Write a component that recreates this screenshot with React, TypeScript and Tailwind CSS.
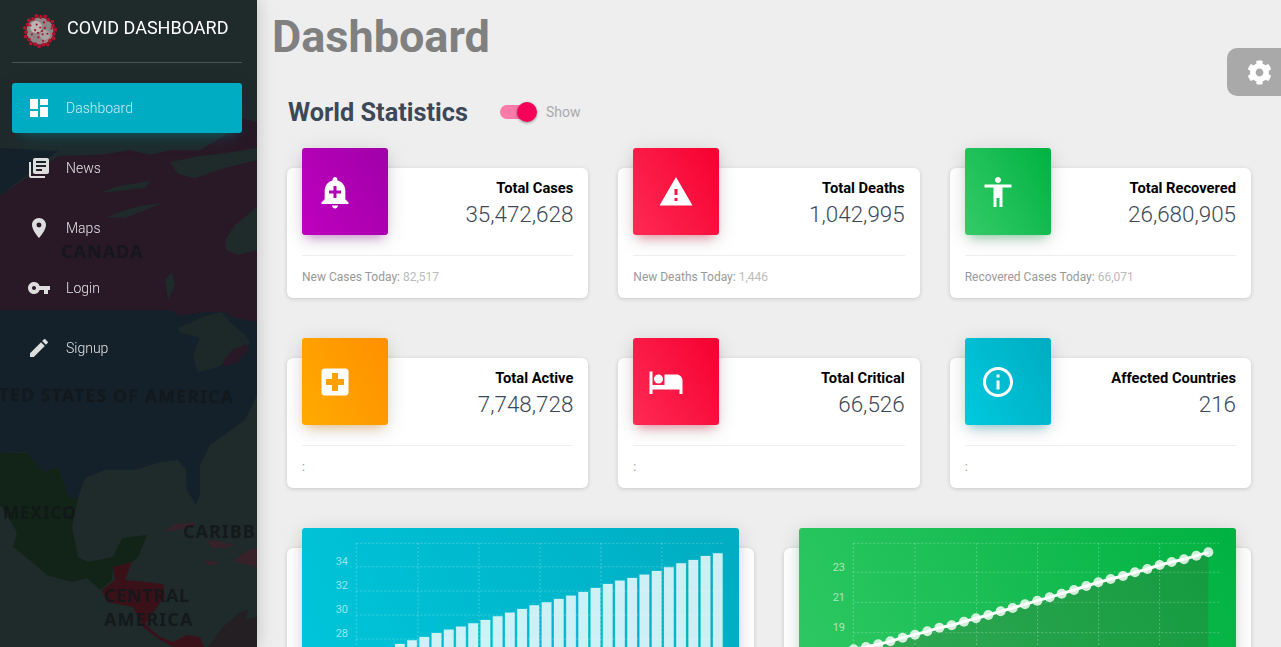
import type { ReactNode } from 'react';
import { FaCog } from 'react-icons/fa';
import {
  MdAccessibility,
  MdAddAlert,
  MdDashboard,
  MdEdit,
  MdHotel,
  MdInfoOutline,
  MdLibraryBooks,
  MdLocalHospital,
  MdPlace,
  MdVpnKey,
  MdWarning,
} from 'react-icons/md';

const navItems = [
  { label: 'Dashboard', icon: <MdDashboard />, active: true },
  { label: 'News', icon: <MdLibraryBooks /> },
  { label: 'Maps', icon: <MdPlace /> },
  { label: 'Login', icon: <MdVpnKey /> },
  { label: 'Signup', icon: <MdEdit /> },
];

const purple = 'bg-[linear-gradient(60deg,#bf00bf,#a000a8)] shadow-[0_4px_20px_rgba(0,0,0,.14),0_7px_10px_-5px_rgba(170,0,180,.4)]';
const red = 'bg-[linear-gradient(60deg,#ff2a55,#f50030)] shadow-[0_4px_20px_rgba(0,0,0,.14),0_7px_10px_-5px_rgba(245,0,50,.4)]';
const green = 'bg-[linear-gradient(60deg,#35cb68,#00b241)] shadow-[0_4px_20px_rgba(0,0,0,.14),0_7px_10px_-5px_rgba(0,180,65,.4)]';
const orange = 'bg-[linear-gradient(60deg,#ffab00,#ff8f00)] shadow-[0_4px_20px_rgba(0,0,0,.14),0_7px_10px_-5px_rgba(255,150,0,.4)]';
const cyan = 'bg-[linear-gradient(60deg,#00c9de,#00acc1)] shadow-[0_4px_20px_rgba(0,0,0,.14),0_7px_10px_-5px_rgba(0,172,193,.4)]';

const stats = [
  { title: 'Total Cases', value: '35,472,628', color: purple, icon: <MdAddAlert />, inset: 'pl-[15px]', note: 'New Cases Today:', extra: '82,517' },
  { title: 'Total Deaths', value: '1,042,995', color: red, icon: <MdWarning />, inset: 'pl-[25px]', note: 'New Deaths Today:', extra: '1,446' },
  { title: 'Total Recovered', value: '26,680,905', color: green, icon: <MdAccessibility />, inset: 'pl-[15px]', note: 'Recovered Cases Today:', extra: '66,071' },
  { title: 'Total Active', value: '7,748,728', color: orange, icon: <MdLocalHospital />, inset: 'pl-[15px]', note: ':', extra: '' },
  { title: 'Total Critical', value: '66,526', color: red, icon: <MdHotel />, inset: 'pl-[15px]', note: ':', extra: '' },
  { title: 'Affected Countries', value: '216', color: cyan, icon: <MdInfoOutline />, inset: 'pl-[15px]', note: ':', extra: '' },
];

// bar tops, read off the chart, in px from the top of the chart panel
const barTops = [372, 361, 351, 339, 329, 320, 310, 300, 289, 278, 267, 256, 247, 237, 227, 216, 204, 192, 182, 174, 164, 153, 142, 130, 120, 108, 100];
const linePoints = [
  [206, 388], [243, 381], [280, 373], [316, 364], [353, 353], [390, 344], [427, 334], [463, 323], [500, 316], [537, 305],
  [573, 295], [610, 285], [647, 274], [683, 264], [720, 253], [757, 242], [794, 232], [830, 221], [867, 210], [904, 198],
  [940, 187], [977, 177], [1014, 168], [1050, 157], [1087, 147], [1124, 135], [1160, 126], [1197, 118], [1234, 107], [1270, 97],
];

const WorldMap = () => (
  <svg className="absolute inset-0 h-full w-full" viewBox="0 0 257 647" preserveAspectRatio="xMinYMin slice">
    <rect width="257" height="647" fill="#1f2a2b" />
    <path d="M0 148L58 151L0 196Z" fill="#14212a" />
    <path d="M0 196L58 156L100 155L130 150L150 155L170 150L200 150L225 135L240 118L257 122V322L235 318L225 312L205 312L180 316L170 310H0Z" fill="#291826" />
    <path d="M100 193L118 186L150 181L145 188L120 191Z M170 162L200 156L225 153L257 148V160L225 168L195 178L178 174Z M107 217L125 210L140 206L163 203L145 210L125 218Z M225 240L235 225L257 207V250L238 255L226 250Z M165 280L172 272L175 285L168 300Z" fill="#1f2a2b" />
    <path d="M0 310H170L180 316L205 312L225 312L235 318L257 322V395L245 420L210 445L200 465L200 495L196 505L187 490L186 470L178 460L160 462L135 470L105 470L85 478L78 498L68 497L63 480L57 467L43 472L35 463L27 452L0 453Z" fill="#14212a" />
    <path d="M178 328L205 316L222 312L230 322L245 335L250 342L238 358L215 368L197 372L193 355L200 338L180 332Z" fill="#1d2829" />
    <path d="M223 362L232 350L246 344L249 350L238 362L225 367Z" fill="#291826" />
    <path d="M0 453H27L35 463L43 472L57 467L63 480L68 497L78 498L72 527L78 557L88 562L113 557L122 538L147 535L138 557L132 562L113 567L112 580L100 590L87 578L72 582L47 575L33 563L13 547L17 533L10 520L0 505Z" fill="#122417" />
    <path d="M113 567L132 562L125 580L147 582L163 584L165 597L157 607L150 617L145 624L160 637L173 642L187 635L200 637L204 647H173L160 640L143 627L133 607L107 602L102 590L115 580Z" fill="#3a1119" />
    <path d="M163 532L175 524L197 522L190 528L175 530Z M207 540L222 542L235 545L225 548L212 548Z M205 560L218 562L216 565L207 565Z M233 561L245 552L257 548V567L248 565Z" fill="#37222a" />
    <path d="M208 647L222 628L240 612L248 610L245 620L257 617V647Z" fill="#241f22" />
    <g fill="#14181b" fontFamily="'Noto Sans', sans-serif" fontWeight="700" opacity="0.9">
      <text x="61" y="258" fontSize="18" letterSpacing="1">CANADA</text>
      <text x="-40" y="401" fontSize="18" letterSpacing="1" transform="rotate(0.6 0 401)">UNITED STATES OF AMERICA</text>
      <text x="3" y="519" fontSize="17" letterSpacing="1">MEXICO</text>
      <text x="183" y="538" fontSize="18" letterSpacing="1">CARIBBEAN</text>
      <text x="104" y="602" fontSize="18" letterSpacing="0.7">CENTRAL</text>
      <text x="104" y="626" fontSize="18" letterSpacing="1">AMERICA</text>
    </g>
  </svg>
);

const Virus = () => {
  const spikes = Array.from({ length: 22 }, (_, i) => {
    const a = (i / 22) * Math.PI * 2 + 0.2;
    const r = i % 2 ? 15.5 : 14;
    return [17 + Math.cos(a) * r, 17 + Math.sin(a) * r];
  });
  const inner = Array.from({ length: 14 }, (_, i) => {
    const a = i * 2.4;
    const r = 2 + i * 0.75;
    return [17 + Math.cos(a) * r, 17 + Math.sin(a) * r];
  });
  return (
    <svg width="34" height="36" viewBox="0 0 34 34" className="shrink-0">
      <circle cx="17" cy="17" r="13.5" fill="#8f8486" />
      <circle cx="13" cy="13" r="6" fill="#bdb5b3" />
      <circle cx="22" cy="21" r="5" fill="#aba3a1" />
      {spikes.map(([x, y], i) => (
        <circle key={i} cx={x} cy={y} r="1.9" fill="#b3142c" />
      ))}
      {inner.map(([x, y], i) => (
        <circle key={i} cx={x} cy={y} r="1.1" fill="#a5182e" />
      ))}
    </svg>
  );
};

const Sidebar = () => (
  <aside className="relative z-10 h-full w-[257px] shrink-0 overflow-hidden shadow-[0_0_16px_rgba(0,0,0,.2)]">
    <WorldMap />
    <div className="relative pr-[15px] pl-3">
      <div className="flex h-[63px] items-center gap-[10px] border-b border-white/20 pl-[11px]">
        <Virus />
        <span className="mb-2 text-[18px] text-white">COVID DASHBOARD</span>
      </div>
      <nav className="mt-5 flex flex-col gap-[10px]">
        {navItems.map((item) => (
          <div
            key={item.label}
            className={
              'flex h-[50px] items-center gap-[15px] rounded-[3px] pl-[15px] text-sm font-light ' +
              (item.active
                ? 'bg-[#00acc1] text-[#c5eef3] shadow-[0_12px_20px_-10px_rgba(0,172,193,.28),0_4px_20px_0_rgba(0,0,0,.12),0_7px_8px_-5px_rgba(0,172,193,.2)]'
                : 'text-[#e4e4e4]')
            }
          >
            <span className={'text-[24px] ' + (item.active ? 'text-white' : 'text-[#dddddd]')}>{item.icon}</span>
            {item.label}
          </div>
        ))}
      </nav>
    </div>
  </aside>
);

const StatCard = ({ title, value, color, icon, inset, note, extra }: (typeof stats)[number]) => (
  <div className="flex h-[130px] flex-col rounded-[6px] bg-white px-[15px] shadow-[0_1px_4px_rgba(0,0,0,.16)]">
    <div className="-mt-5 flex h-[87px] shrink-0">
      <div className={'flex w-[86px] shrink-0 items-center rounded-[3px] text-[36px] text-white ' + inset + ' ' + color}>
        {icon}
      </div>
      <div className="flex-1 pt-[30px] text-right">
        <p className="text-[14.7px] leading-5 font-bold text-black">{title}</p>
        <p className="mt-px text-[22.4px] leading-[30px] font-light text-[#3c4858]">{value}</p>
      </div>
    </div>
    <div className="mt-5 border-t border-[#eeeeee] pt-[13px] text-xs leading-4 text-[#999999]">
      {note} <span className="text-[#bbbbbb]">{extra}</span>
    </div>
  </div>
);

const BarChart = () => (
  <svg width="437" height="240" viewBox="0 0 437 240">
    <g stroke="rgba(255,255,255,.25)" strokeDasharray="2 2">
      {[54.3, 116, 177, 238, 299, 360].map((x) => (
        <line key={x} x1={x} x2={x} y1="15" y2="240" />
      ))}
      {[15.3, 38.7, 63, 87, 111].map((y) => (
        <line key={y} x1="54.3" x2="420.6" y1={y} y2={y} />
      ))}
    </g>
    <g fill="rgba(255,255,255,.6)" fontSize="11" textAnchor="end">
      <text x="46" y="37">34</text>
      <text x="46" y="61">32</text>
      <text x="46" y="85">30</text>
      <text x="46" y="109">28</text>
    </g>
    {barTops.map((top, i) => (
      <rect
        key={i}
        x={93 + i * 12.23}
        y={top / 3 - 8}
        width="9.6"
        height="240"
        fill="rgba(255,255,255,.8)"
        stroke="rgba(255,255,255,.2)"
      />
    ))}
  </svg>
);

const LineChart = () => {
  // points were read at 3x from x=785,y=520
  const pts = linePoints.map(([x, y]) => [x / 3 + 785 - 799, y / 3 + 520 - 528]);
  const line = pts.map(([x, y]) => `${x},${y}`).join(' ');
  return (
    <svg width="437" height="240" viewBox="0 0 437 240">
      <polygon points={`${pts[0][0]},240 ${line} ${pts[pts.length - 1][0]},240`} fill="rgba(80,70,50,.22)" />
      <g stroke="rgba(255,255,255,.25)" strokeDasharray="2 2">
        {[54.3, 116, 177.6, 238.6, 299.6, 360.6].map((x) => (
          <line key={x} x1={x} x2={x} y1="15" y2="240" />
        ))}
        {[15.3, 44.3, 74.3, 104.7].map((y) => (
          <line key={y} x1="54.3" x2="421" y1={y} y2={y} />
        ))}
      </g>
      <g fill="rgba(255,255,255,.6)" fontSize="11" textAnchor="end">
        <text x="46" y="43">23</text>
        <text x="46" y="73">21</text>
        <text x="46" y="103">19</text>
      </g>
      <polyline points={line} fill="none" stroke="#ffffff" strokeWidth="3" />
      {pts.map(([x, y], i) => (
        <circle key={i} cx={x} cy={y} r="5" fill="rgba(255,255,255,.8)" />
      ))}
    </svg>
  );
};

const ChartCard = ({ color, children }: { color: string; children: ReactNode }) => (
  <div className="h-[300px] rounded-[6px] bg-white px-[15px] shadow-[0_1px_4px_rgba(0,0,0,.16)]">
    <div className={'-mt-5 h-[260px] overflow-hidden rounded-[3px] ' + color}>{children}</div>
  </div>
);

export default function App() {
  return (
    <div className="flex h-screen w-full overflow-hidden bg-[#eeeeee] font-[Roboto,sans-serif]">
      <Sidebar />
      <main className="relative min-w-0 flex-1">
        <h1 className="flex h-[74px] items-center pl-[15px] text-[45px] font-bold text-[#808080]">Dashboard</h1>
        <div className="px-[30px]">
          <div className="flex h-[76px] items-center pl-px">
            <h2 className="pt-[2px] text-[25.3px] font-bold text-[#3c4858]">World Statistics</h2>
            <div className="relative ml-8 h-[14px] w-[34px] rounded-full bg-[#fa7aa8]">
              <span className="absolute top-[-3px] left-[17px] h-5 w-5 rounded-full bg-[#f50057] shadow-[0_1px_3px_rgba(0,0,0,.4)]" />
            </div>
            <span className="ml-3 text-sm text-[#aaaaaa]">Show</span>
          </div>
          <div className="mt-[18px] grid grid-cols-3 gap-x-[30px] gap-y-[60px]">
            {stats.map((s) => (
              <StatCard key={s.title} {...s} />
            ))}
          </div>
          <div className="mt-[60px] grid grid-cols-2 gap-x-[30px]">
            <ChartCard color={cyan}>
              <BarChart />
            </ChartCard>
            <ChartCard color={green}>
              <LineChart />
            </ChartCard>
          </div>
        </div>
        <button className="absolute top-12 right-0 flex h-12 w-[54px] items-center rounded-l-[10px] bg-[#a9a9a9] pl-5 text-[25px] text-white">
          <FaCog />
        </button>
      </main>
    </div>
  );
}
